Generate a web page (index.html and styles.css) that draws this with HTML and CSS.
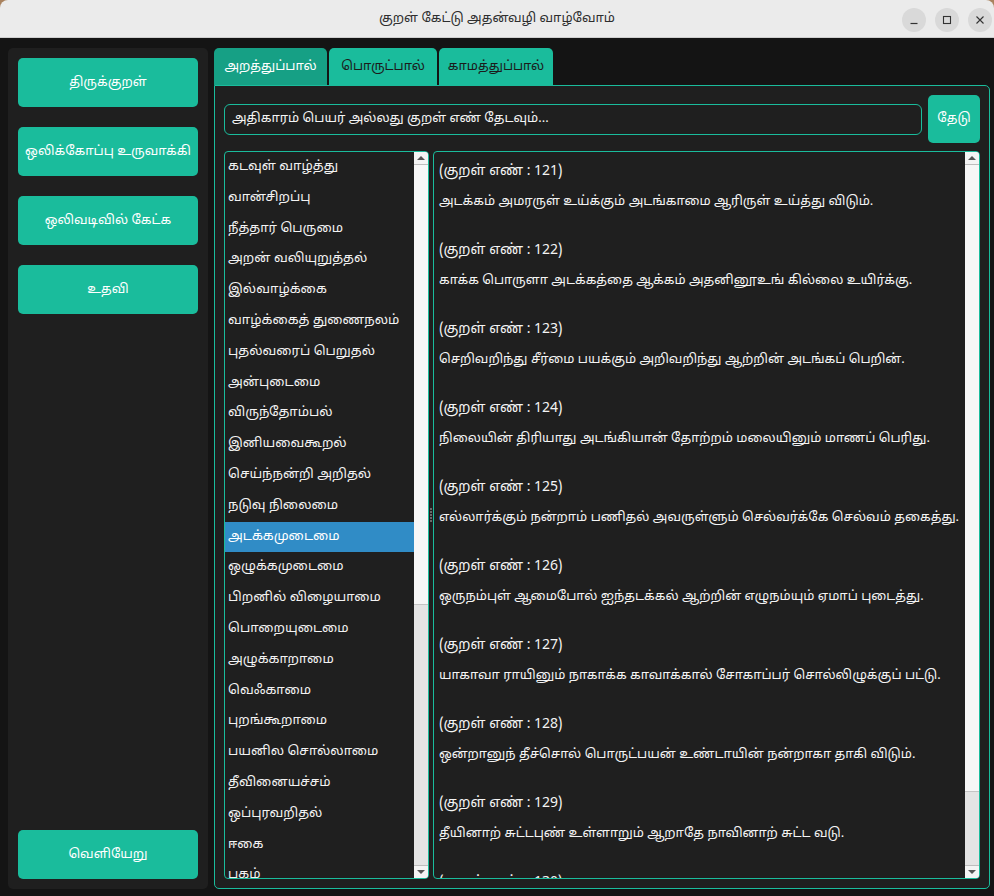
FILE: index.html
```html
<!DOCTYPE html>
<html lang="ta">
<head>
<meta charset="utf-8">
<title>குறள் கேட்டு அதன்வழி வாழ்வோம்</title>
<link rel="stylesheet" href="styles.css">
</head>
<body>
<div class="desk">
  <header class="titlebar">
    <div class="title">குறள் கேட்டு அதன்வழி வாழ்வோம்</div>
    <div class="controls">
      <span class="ctl"><svg width="10" height="10" viewBox="0 0 10 10"><path d="M1.5 8.5h7" stroke="#333" stroke-width="1.2"/></svg></span>
      <span class="ctl"><svg width="10" height="10" viewBox="0 0 10 10"><rect x="1.5" y="1.5" width="7" height="7" fill="none" stroke="#333" stroke-width="1.1"/></svg></span>
      <span class="ctl"><svg width="10" height="10" viewBox="0 0 10 10"><path d="M1.5 1.5l7 7M8.5 1.5l-7 7" stroke="#333" stroke-width="1.1"/></svg></span>
    </div>
  </header>
</div>
<main class="app">
  <aside class="sidebar">
    <button class="navbtn">திருக்குறள்</button>
    <button class="navbtn">ஒலிக்கோப்பு உருவாக்கி</button>
    <button class="navbtn">ஒலிவடிவில் கேட்க</button>
    <button class="navbtn">உதவி</button>
    <div class="spacer"></div>
    <button class="navbtn">வெளியேறு</button>
  </aside>
  <section class="content">
    <nav class="tabs">
      <div class="tab active t1">அறத்துப்பால்</div>
      <div class="tab t2">பொருட்பால்</div>
      <div class="tab t3">காமத்துப்பால்</div>
    </nav>
    <div class="panel">
      <div class="searchrow">
        <div class="search">அதிகாரம் பெயர் அல்லது குறள் எண் தேடவும்...</div>
        <button class="searchbtn">தேடு</button>
      </div>
      <div class="split">
        <div class="list">
          <ul class="items">
            <li>கடவுள் வாழ்த்து</li>
            <li>வான்சிறப்பு</li>
            <li>நீத்தார் பெருமை</li>
            <li>அறன் வலியுறுத்தல்</li>
            <li>இல்வாழ்க்கை</li>
            <li>வாழ்க்கைத் துணைநலம்</li>
            <li>புதல்வரைப் பெறுதல்</li>
            <li>அன்புடைமை</li>
            <li>விருந்தோம்பல்</li>
            <li>இனியவைகூறல்</li>
            <li>செய்ந்நன்றி அறிதல்</li>
            <li>நடுவு நிலைமை</li>
            <li class="sel">அடக்கமுடைமை</li>
            <li>ஒழுக்கமுடைமை</li>
            <li>பிறனில் விழையாமை</li>
            <li>பொறையுடைமை</li>
            <li>அழுக்காறாமை</li>
            <li>வெஃகாமை</li>
            <li>புறங்கூறாமை</li>
            <li>பயனில சொல்லாமை</li>
            <li>தீவினையச்சம்</li>
            <li>ஒப்புரவறிதல்</li>
            <li>ஈகை</li>
            <li>புகழ்</li>
          </ul>
          <div class="sbar">
            <div class="arrow up"></div>
            <div class="track"><div class="handle list-handle"></div></div>
            <div class="arrow down"></div>
          </div>
        </div>
        <div class="splitter"><span></span><span></span><span></span><span></span><span></span></div>
        <div class="textview">
          <div class="verses">
            <div class="kural"><p class="num">(குறள் எண் : 121)</p><p class="line">அடக்கம் அமரருள் உய்க்கும் அடங்காமை ஆரிருள் உய்த்து விடும்.</p></div>
            <div class="kural"><p class="num">(குறள் எண் : 122)</p><p class="line">காக்க பொருளா அடக்கத்தை ஆக்கம் அதனினூஉங் கில்லை உயிர்க்கு.</p></div>
            <div class="kural"><p class="num">(குறள் எண் : 123)</p><p class="line">செறிவறிந்து சீர்மை பயக்கும் அறிவறிந்து ஆற்றின் அடங்கப் பெறின்.</p></div>
            <div class="kural"><p class="num">(குறள் எண் : 124)</p><p class="line">நிலையின் திரியாது அடங்கியான் தோற்றம் மலையினும் மாணப் பெரிது.</p></div>
            <div class="kural"><p class="num">(குறள் எண் : 125)</p><p class="line">எல்லார்க்கும் நன்றாம் பணிதல் அவருள்ளும் செல்வர்க்கே செல்வம் தகைத்து.</p></div>
            <div class="kural"><p class="num">(குறள் எண் : 126)</p><p class="line">ஒருநம்புள் ஆமைபோல் ஐந்தடக்கல் ஆற்றின் எழுநம்யும் ஏமாப் புடைத்து.</p></div>
            <div class="kural"><p class="num">(குறள் எண் : 127)</p><p class="line">யாகாவா ராயினும் நாகாக்க காவாக்கால் சோகாப்பர் சொல்லிழுக்குப் பட்டு.</p></div>
            <div class="kural"><p class="num">(குறள் எண் : 128)</p><p class="line">ஒன்றானுந் தீச்சொல் பொருட்பயன் உண்டாயின் நன்றாகா தாகி விடும்.</p></div>
            <div class="kural"><p class="num">(குறள் எண் : 129)</p><p class="line">தீயினாற் சுட்டபுண் உள்ளாறும் ஆறாதே நாவினாற் சுட்ட வடு.</p></div>
            <div class="kural"><p class="num">(குறள் எண் : 130)</p><p class="line">கதங்காத்துக் கற்றடங்கல் ஆற்றுவான் செவ்வி அறம்பார்க்கும் ஆற்றின் நுழைந்து.</p></div>
          </div>
          <div class="sbar">
            <div class="arrow up"></div>
            <div class="track"><div class="handle text-handle"></div></div>
            <div class="arrow down"></div>
          </div>
        </div>
      </div>
    </div>
  </section>
</main>
</body>
</html>
```

FILE: styles.css
```css
* { box-sizing: border-box; }
html, body { margin: 0; padding: 0; }
body {
  width: 994px;
  height: 896px;
  overflow: hidden;
  background: #141414;
  font-family: "Noto Sans Tamil", "Lohit Tamil", "Noto Sans", "DejaVu Sans", sans-serif;
  color: #f2f2f2;
}
.desk { background: #a9825e; }
.titlebar {
  height: 38px;
  background: #ebebeb;
  border-radius: 8px 8px 0 0;
  border-bottom: 1px solid #cfcfcf;
  display: flex;
  align-items: center;
  justify-content: center;
  position: relative;
}
.title { font-size: 13px; color: #2e2e2e; }
.controls {
  position: absolute;
  right: 2px;
  top: 8px;
  display: flex;
  gap: 9px;
}
.ctl {
  width: 24px; height: 24px;
  border-radius: 50%;
  background: #d9d9d9;
  display: flex; align-items: center; justify-content: center;
}
.app {
  display: flex;
  gap: 6px;
  padding: 10px 4px 7px 8px;
  height: 858px;
}
.sidebar {
  width: 200px;
  flex-shrink: 0;
  background: #1f1f1f;
  border-radius: 5px;
  padding: 10px;
  display: flex;
  flex-direction: column;
  gap: 20px;
}
.spacer { flex: 1; margin-top: -20px; }
.navbtn {
  height: 49px;
  flex-shrink: 0;
  border: none;
  border-radius: 5px;
  background: #1abc9c;
  color: #ffffff;
  font-family: inherit;
  font-size: 13px;
  white-space: nowrap;
}
.content {
  flex: 1;
  min-width: 0;
  display: flex;
  flex-direction: column;
}
.tabs { display: flex; gap: 2px; height: 37px; flex-shrink: 0; }
.tab {
  border-radius: 5px 5px 0 0;
  background: #1abc9c;
  color: #1b1b1b;
  font-size: 13px;
  display: flex; align-items: center; justify-content: center;
}
.tab.active { background: #16a085; color: #ffffff; }
.t1 { width: 113px; }
.t2 { width: 108px; }
.t3 { width: 114px; }
.panel {
  flex: 1;
  background: #1f1f1f;
  border: 1px solid #1abc9c;
  border-radius: 0 5px 5px 5px;
  padding: 9px;
  display: flex;
  flex-direction: column;
  gap: 8px;
  min-height: 0;
}
.searchrow { display: flex; align-items: center; gap: 6px; height: 48px; flex-shrink: 0; }
.search {
  flex: 1;
  height: 31px;
  border: 1px solid #1abc9c;
  border-radius: 6px;
  font-size: 13px;
  color: #f4f4f4;
  padding: 0 7px;
  display: flex; align-items: center;
}
.searchbtn {
  width: 52px; height: 48px;
  flex-shrink: 0;
  border: none;
  border-radius: 5px;
  background: #1abc9c;
  color: #fff;
  font-family: inherit;
  font-size: 13px;
}
.split { flex: 1; display: flex; min-height: 0; }
.list {
  width: 205px;
  flex-shrink: 0;
  border: 1px solid #1abc9c;
  border-radius: 4px;
  display: flex;
  overflow: hidden;
}
.items {
  list-style: none;
  margin: 0; padding: 0;
  flex: 1;
  overflow: hidden;
}
.items li {
  height: 30.8px;
  line-height: 30.8px;
  padding-left: 3px;
  font-size: 13.2px;
  white-space: nowrap;
  color: #f2f2f2;
}
.items li.sel { background: #308cc6; color: #ffffff; }
.splitter {
  width: 4px;
  flex-shrink: 0;
  display: flex;
  flex-direction: column;
  justify-content: center;
  align-items: center;
  gap: 1px;
}
.splitter span { width: 2px; height: 2px; background: #6a6a6a; }
.textview {
  flex: 1;
  min-width: 0;
  border: 1px solid #1abc9c;
  border-radius: 4px;
  display: flex;
  overflow: hidden;
}
.verses { flex: 1; padding: 4px 5px 0; overflow: hidden; }
.kural { margin-bottom: 17px; }
.kural p { margin: 0; height: 31px; line-height: 31px; font-size: 13px; white-space: nowrap; color: #f4f4f4; }
.kural p.num { font-size: 14px; }
.sbar {
  width: 14px;
  flex-shrink: 0;
  background: #e4e4e4;
  display: flex;
  flex-direction: column;
}
.arrow {
  height: 13px;
  background: #f4f4f4;
  position: relative;
}
.arrow.up { border-bottom: 1px solid #bdbdbd; }
.arrow.down { border-top: 1px solid #bdbdbd; }
.arrow::after {
  content: "";
  position: absolute;
  left: 3px; top: 4px;
  border-left: 4px solid transparent;
  border-right: 4px solid transparent;
}
.arrow.up::after { border-bottom: 4px solid #555; }
.arrow.down::after { border-top: 4px solid #555; }
.track { flex: 1; display: flex; flex-direction: column; }
.handle {
  background: #f7f7f7;
  border-bottom: 1px solid #c4c4c4;
}
.list-handle { height: 440px; }
.text-handle { height: 627px; }
```
